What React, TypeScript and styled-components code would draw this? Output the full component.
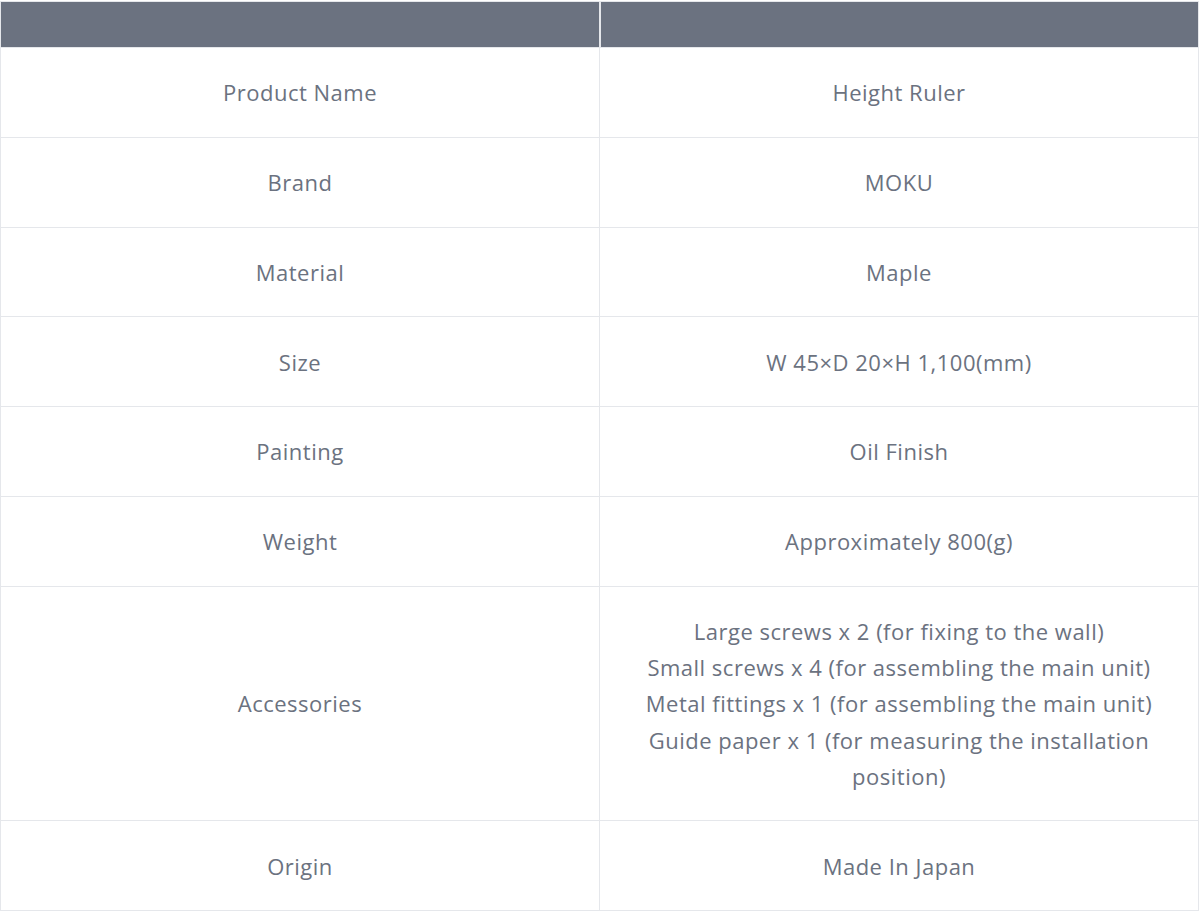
import React from "react";
import styled, { createGlobalStyle } from "styled-components";

const Global = createGlobalStyle`
  html, body { margin: 0; padding: 0; background: #ffffff; }
  body { font-family: "Open Sans", "Noto Sans", "Liberation Sans", sans-serif; }
`;

const Wrap = styled.div`
  padding: 1px 1px 0 0;
`;

const Table = styled.table`
  width: 1199px;
  border-collapse: collapse;
  table-layout: fixed;
  border: 1px solid #e5e7eb;
`;

const HeadCell = styled.th`
  background: #6b7280;
  height: 45px;
  padding: 0;
  border-left: 2px solid #e5e7eb;
  &:first-child { border-left: none; }
`;

const Cell = styled.td`
  border: 1px solid #e5e7eb;
  padding: 26.3px 40px;
  text-align: center;
  vertical-align: middle;
  color: #6b7280;
  font-size: 22px;
  line-height: 36.2px;
  letter-spacing: 0.5px;
`;

const rows: [string, string[]][] = [
  ["Product Name", ["Height Ruler"]],
  ["Brand", ["MOKU"]],
  ["Material", ["Maple"]],
  ["Size", ["W 45×D 20×H 1,100(mm)"]],
  ["Painting", ["Oil Finish"]],
  ["Weight", ["Approximately 800(g)"]],
  [
    "Accessories",
    [
      "Large screws x 2 (for fixing to the wall)",
      "Small screws x 4 (for assembling the main unit)",
      "Metal fittings x 1 (for assembling the main unit)",
      "Guide paper x 1 (for measuring the installation position)",
    ],
  ],
  ["Origin", ["Made In Japan"]],
];

export default function App() {
  return (
    <Wrap>
      <Global />
      <Table>
        <thead>
          <tr>
            <HeadCell />
            <HeadCell />
          </tr>
        </thead>
        <tbody>
          {rows.map(([k, v]) => (
            <tr key={k}>
              <Cell>{k}</Cell>
              <Cell>
                {v.map((line, i) => (
                  <React.Fragment key={i}>
                    {i > 0 && <br />}
                    {line}
                  </React.Fragment>
                ))}
              </Cell>
            </tr>
          ))}
        </tbody>
      </Table>
    </Wrap>
  );
}
